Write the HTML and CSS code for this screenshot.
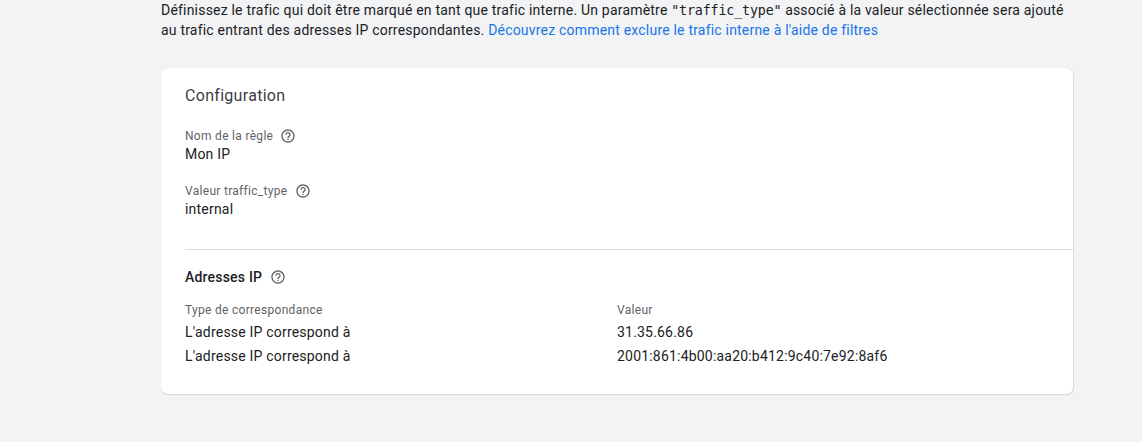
FILE: index.html

```html
<!DOCTYPE html>
<html lang="fr">
<head>
    <meta charset="UTF-8">
    <title>Configuration du trafic interne</title>
    <link rel="stylesheet" href="styles.css">
</head>
<body>
    <p class="intro">Définissez le trafic qui doit être marqué en tant que trafic interne. Un paramètre <code>"traffic_type"</code> associé à la valeur sélectionnée sera ajouté au trafic entrant des adresses IP correspondantes. <a href="#">Découvrez comment exclure le trafic interne à l'aide de filtres</a></p>

    <div class="card">
        <div class="card-top">
            <h2>Configuration</h2>
            <div class="field">
                <div class="field-label">Nom de la règle
                    <svg class="help" viewBox="0 0 24 24"><path d="M11 18h2v-2h-2v2zm1-16C6.48 2 2 6.48 2 12s4.48 10 10 10 10-4.48 10-10S17.52 2 12 2zm0 18c-4.41 0-8-3.59-8-8s3.59-8 8-8 8 3.59 8 8-3.59 8-8 8zm0-14c-2.21 0-4 1.79-4 4h2c0-1.1.9-2 2-2s2 .9 2 2c0 2-3 1.75-3 5h2c0-2.25 3-2.5 3-5 0-2.21-1.79-4-4-4z"/></svg>
                </div>
                <div class="field-value">Mon IP</div>
            </div>
            <div class="field">
                <div class="field-label">Valeur traffic_type
                    <svg class="help" viewBox="0 0 24 24"><path d="M11 18h2v-2h-2v2zm1-16C6.48 2 2 6.48 2 12s4.48 10 10 10 10-4.48 10-10S17.52 2 12 2zm0 18c-4.41 0-8-3.59-8-8s3.59-8 8-8 8 3.59 8 8-3.59 8-8 8zm0-14c-2.21 0-4 1.79-4 4h2c0-1.1.9-2 2-2s2 .9 2 2c0 2-3 1.75-3 5h2c0-2.25 3-2.5 3-5 0-2.21-1.79-4-4-4z"/></svg>
                </div>
                <div class="field-value">internal</div>
            </div>
        </div>

        <div class="card-bottom">
            <h3>Adresses IP
                <svg class="help" viewBox="0 0 24 24"><path d="M11 18h2v-2h-2v2zm1-16C6.48 2 2 6.48 2 12s4.48 10 10 10 10-4.48 10-10S17.52 2 12 2zm0 18c-4.41 0-8-3.59-8-8s3.59-8 8-8 8 3.59 8 8-3.59 8-8 8zm0-14c-2.21 0-4 1.79-4 4h2c0-1.1.9-2 2-2s2 .9 2 2c0 2-3 1.75-3 5h2c0-2.25 3-2.5 3-5 0-2.21-1.79-4-4-4z"/></svg>
            </h3>
            <div class="ip-table">
                <div class="ip-head">Type de correspondance</div>
                <div class="ip-head">Valeur</div>
                <div class="ip-cell">L'adresse IP correspond à</div>
                <div class="ip-cell">31.35.66.86</div>
                <div class="ip-cell">L'adresse IP correspond à</div>
                <div class="ip-cell">2001:861:4b00:aa20:b412:9c40:7e92:8af6</div>
            </div>
        </div>
    </div>
</body>
</html>
```

FILE: styles.css

```css
html, body {
    height: 100%;
}
body {
    margin: 0;
    padding: 0 68px 0 161px;
    box-sizing: border-box;
    overflow: hidden;
    background-color: #f1f3f4;
    color: #202124;
    font-family: Roboto, Arial, sans-serif;
    font-size: 14px;
    letter-spacing: 0.2px;
}
.intro {
    margin: 0 0 28px;
    line-height: 20px;
}
.intro code {
    font-family: "DejaVu Sans Mono", monospace;
    font-size: 13.33px;
    line-height: 1;
    letter-spacing: -0.15px;
}
.intro a {
    color: #1a73e8;
    text-decoration: none;
}
.card {
    height: 327px;
    box-sizing: border-box;
    background-color: #fff;
    border-radius: 8px;
    border-right: 1px solid #dadce0;
    border-bottom: 1px solid #dadce0;
    box-shadow: 0 0 1px #dadce0;
}
.card-top {
    padding: 18px 0 0 24px;
}
.card h2 {
    margin: 0 0 21px;
    font-size: 16px;
    font-weight: 400;
    line-height: 20px;
    letter-spacing: 0.3px;
    color: #3c4043;
}
.field {
    margin-bottom: 18px;
}
.field-label {
    display: flex;
    align-items: center;
    gap: 7px;
    height: 17px;
    font-size: 12px;
    letter-spacing: 0.3px;
    color: #5f6368;
}
.field-value {
    line-height: 20px;
}
.help {
    width: 16px;
    height: 16px;
    fill: #5f6368;
}
.card-bottom {
    margin: 30px 0 0 24px;
    padding-top: 17px;
    border-top: 1px solid #dadce0;
}
.card h3 {
    display: flex;
    align-items: center;
    gap: 8px;
    margin: 0 0 12px;
    height: 20px;
    font-size: 14px;
    font-weight: 500;
}
.ip-table {
    display: grid;
    grid-template-columns: 432px 1fr;
    grid-template-rows: 21px 24px 24px;
    align-items: center;
}
.ip-head {
    font-size: 12px;
    letter-spacing: 0.3px;
    color: #5f6368;
}
```
